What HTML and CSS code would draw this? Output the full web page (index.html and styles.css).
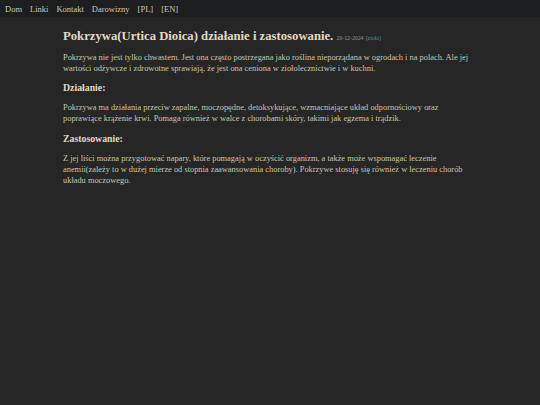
FILE: index.html
```html
<!DOCTYPE html>
<html lang="pl">
<head>
<meta charset="utf-8">
<link rel="stylesheet" href="styles.css">
</head>
<body>
<nav class="nav">
  <a href="#">Dom</a>
  <a href="#">Linki</a>
  <a href="#">Kontakt</a>
  <a href="#">Darowizny</a>
  <a href="#">[PL]</a>
  <a href="#">[EN]</a>
</nav>
<main class="content">
  <h1 class="title">Pokrzywa(Urtica Dioica) działanie i zastosowanie. <span class="date">20-12-2024</span> <a class="tag" href="#">[zioła]</a></h1>
  <p>Pokrzywa nie jest tylko chwastem. Jest ona często postrzegana jako roślina nieporządana w ogrodach i na polach. Ale jej wartości odżywcze i zdrowotne sprawiają, że jest ona ceniona w ziołolecznictwie i w kuchni.</p>
  <h2>Działanie:</h2>
  <p>Pokrzywa ma działania przeciw zapalne, moczopędne, detoksykujące, wzmacniające układ odpornościowy oraz poprawiące krążenie krwi. Pomaga również w walce z chorobami skóry, takimi jak egzema i trądzik.</p>
  <h2>Zastosowanie:</h2>
  <p>Z jej liści można przygotować napary, które pomagają w oczyścić organizm, a także może wspomagać leczenie anemii(zależy to w dużej mierze od stopnia zaawansowania choroby). Pokrzywe stosuję się również w leczeniu chorób układu moczowego.</p>
</main>
</body>
</html>
```
FILE: styles.css
```css
html, body {
  margin: 0;
  padding: 0;
  background: #262626;
  min-height: 100%;
}
body {
  font-family: "Liberation Serif", "Times New Roman", serif;
  color: #d6cfbb;
}
.nav {
  background: #1d1e20;
  height: 17px;
  display: flex;
  align-items: center;
  gap: 8px;
  padding: 0 5px;
  font-size: 8.5px;
}
.nav a {
  color: #cfc8b4;
  text-decoration: none;
}
.content {
  width: 414px;
  margin-left: 63px;
  padding-top: 11px;
}
.title {
  font-size: 12.7px;
  font-weight: bold;
  color: #e2dac4;
  margin: 0 0 5.5px;
  line-height: 16px;
}
.date {
  font-size: 5.8px;
  font-weight: normal;
  color: #9a968c;
}
.tag {
  font-size: 5.8px;
  font-weight: normal;
  color: #4f9a9c;
  text-decoration: none;
  margin-left: -1px;
}
p {
  font-size: 8.4px;
  line-height: 11px;
  margin: 0 0 8.5px;
  color: #cac3af;
}
h2 {
  font-size: 9.8px;
  font-weight: bold;
  margin: 0 0 8.2px;
  line-height: 12px;
  color: #e0d8c2;
}
```
